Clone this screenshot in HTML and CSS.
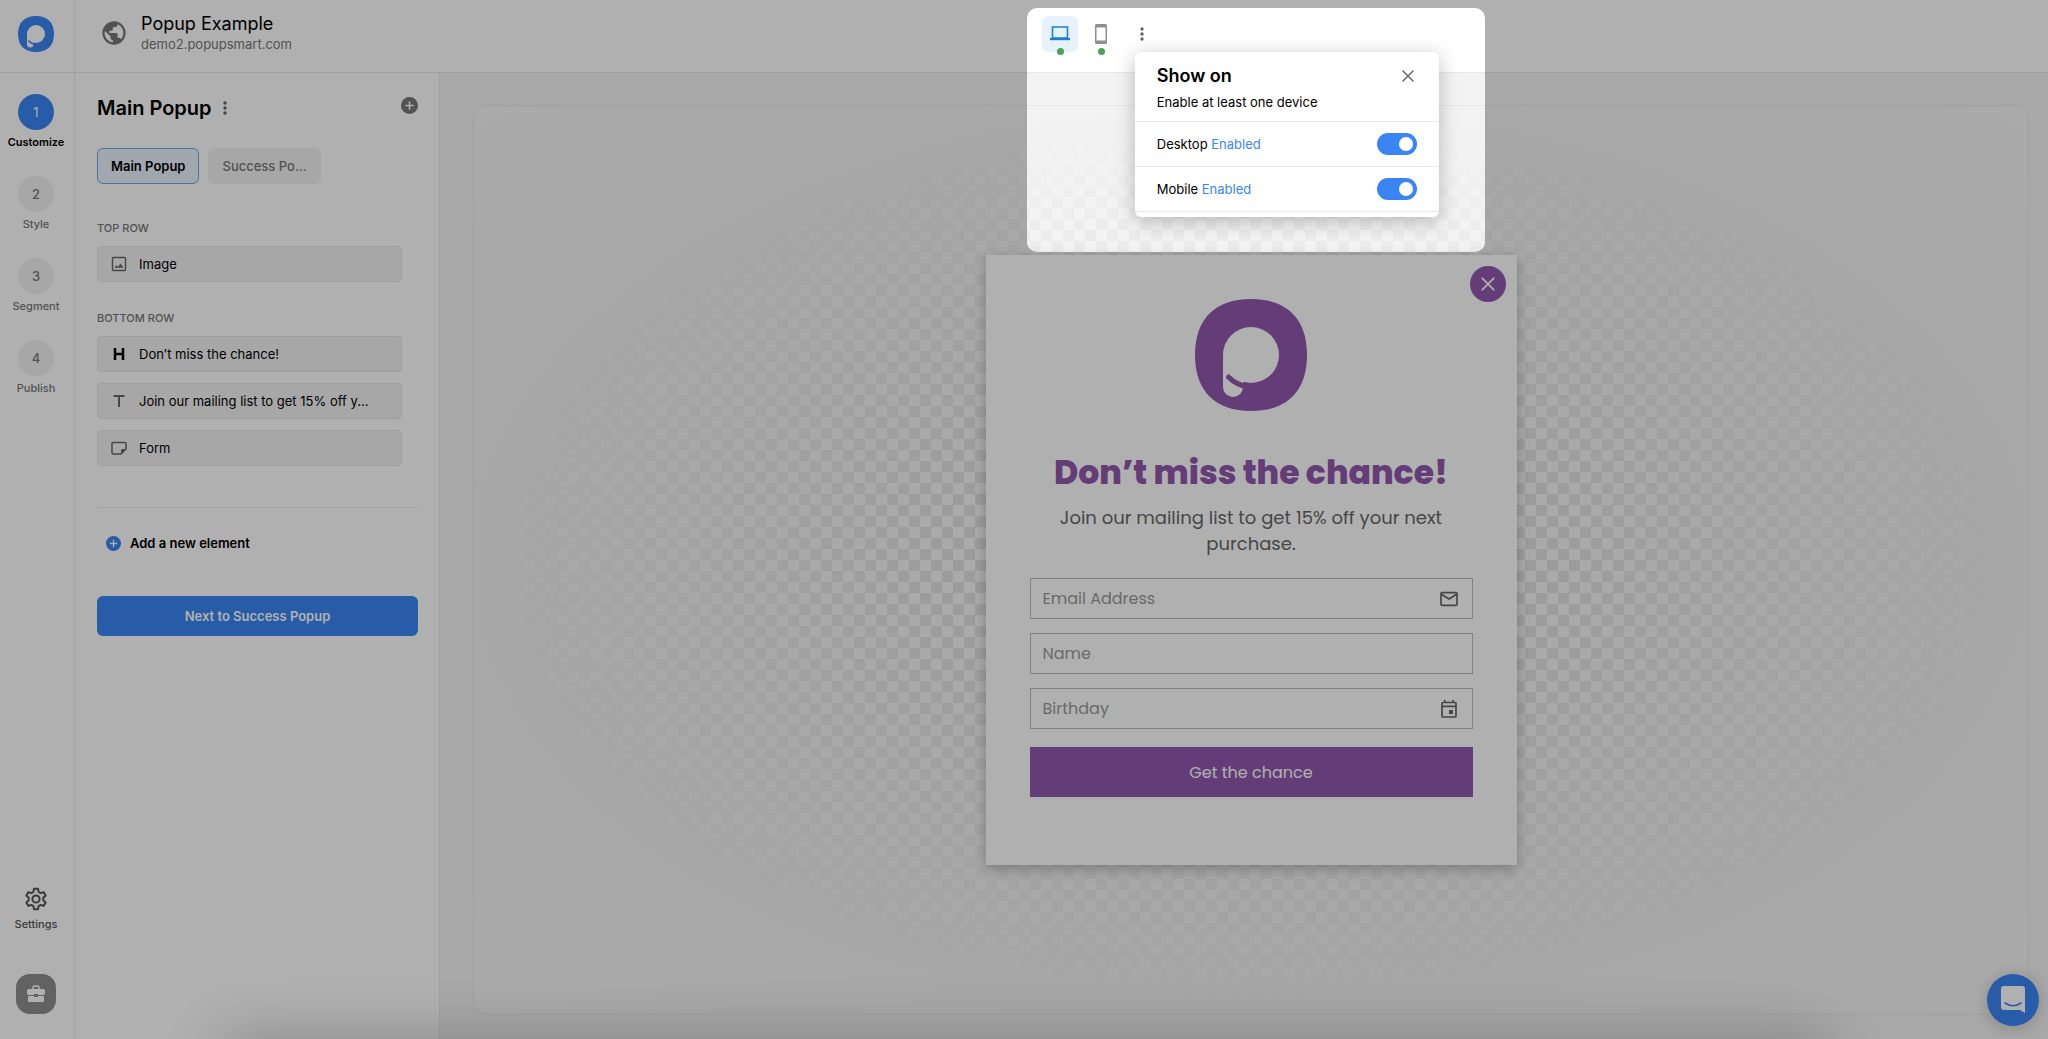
FILE: index.html
```html
<!DOCTYPE html>
<html lang="en">
<head>
  <meta charset="UTF-8" />
  <meta name="viewport" content="width=device-width, initial-scale=1.0" />
  <title>Popup Example - Popupsmart</title>
  <link rel="stylesheet" href="styles.css">
</head>
<body>

<svg class="sprite" aria-hidden="true">
  <symbol id="logo" viewBox="0 0 112 112">
    <path fill="currentColor" d="M56 0C92 0 112 20 112 56S92 112 56 112 0 92 0 56 20 0 56 0z"/>
    <circle cx="56" cy="56" r="28" fill="#fff"/>
    <path fill="#fff" d="M28 56V88a10 10 0 0 0 20 0V84L56 70z"/>
    <path fill="none" stroke="currentColor" stroke-width="5" stroke-linecap="round" d="M33.500 78Q41 86 54 88"/>
    <path fill="currentColor" d="M48 85Q56 86 66 83L60 96H48z"/>
  </symbol>
  <symbol id="plus-circle" viewBox="0 0 18 18">
    <circle cx="9" cy="9" r="9" fill="currentColor"/>
    <path d="M9 4.500v9M4.500 9h9" stroke="#fff" stroke-width="1.600"/>
  </symbol>
  <symbol id="dots" viewBox="0 0 4 14">
    <circle cx="2" cy="2" r="1.700" fill="currentColor"/>
    <circle cx="2" cy="7" r="1.700" fill="currentColor"/>
    <circle cx="2" cy="12" r="1.700" fill="currentColor"/>
  </symbol>
  <symbol id="cross" viewBox="0 0 12 12">
    <path d="M1 1l10 10M11 1L1 11" fill="none" stroke="currentColor" stroke-width="1.500" stroke-linecap="round"/>
  </symbol>
</svg>

<header class="topbar">
  <a class="brand" href="#" aria-label="Popupsmart"><svg width="36" height="36"><use href="#logo"/></svg></a>
  <div class="topbar-main">
    <div class="site">
      <svg width="28" height="28" viewBox="0 0 24 24" fill="currentColor"><path d="M12 2C6.480 2 2 6.480 2 12s4.480 10 10 10 10-4.480 10-10S17.520 2 12 2zm-1 17.930c-3.950-.490-7-3.850-7-7.930 0-.620.080-1.210.210-1.790L9 15v1c0 1.100.9 2 2 2v1.930zm6.900-2.540c-.260-.810-1-1.390-1.900-1.390h-1v-3c0-.550-.450-1-1-1H8v-2h2c.550 0 1-.450 1-1V7h2c1.100 0 2-.9 2-2v-.410c2.930 1.190 5 4.060 5 7.410 0 2.080-.8 3.970-2.100 5.390z"/></svg>
      <div>
        <div class="site-name">Popup Example</div>
        <div class="site-url">demo2.popupsmart.com</div>
      </div>
    </div>

    <div class="devices">
      <button class="device active" aria-label="Desktop">
        <svg width="20" height="20" viewBox="0 0 20 20"><path d="M2.500 3h15v11h-15z" fill="none" stroke="currentColor" stroke-width="1.600"/><path d="M0 14h20v2.200H0z" fill="currentColor"/></svg>
      </button>
      <button class="device" aria-label="Mobile">
        <svg width="12" height="20" viewBox="0 0 12 20"><path d="M1.500 0h9A1.500 1.500 0 0 1 12 1.500v17a1.500 1.500 0 0 1-1.500 1.500h-9A1.500 1.500 0 0 1 0 18.500v-17A1.500 1.500 0 0 1 1.500 0zM1.500 3.500v13h9v-13z" fill="currentColor" fill-rule="evenodd"/></svg>
      </button>
      <button class="device" aria-label="Device options"><svg width="4" height="14"><use href="#dots"/></svg></button>

      <section class="popover">
        <div class="popover-head">
          <h2>Show on</h2>
          <button class="plain" aria-label="Close"><svg width="12" height="12"><use href="#cross"/></svg></button>
          <p>Enable at least one device</p>
        </div>
        <div class="popover-row">
          <label for="onDesktop">Desktop <span>Enabled</span></label>
          <input type="checkbox" class="switch" id="onDesktop" checked>
        </div>
        <div class="popover-row">
          <label for="onMobile">Mobile <span>Enabled</span></label>
          <input type="checkbox" class="switch" id="onMobile" checked>
        </div>
      </section>

      <!-- tour highlight: its shadow dims the rest of the page -->
      <div class="spotlight"></div>
    </div>
  </div>
</header>

<div class="workspace">
  <nav class="rail">
    <a class="step current" href="#"><span>1</span>Customize</a>
    <a class="step" href="#"><span>2</span>Style</a>
    <a class="step" href="#"><span>3</span>Segment</a>
    <a class="step" href="#"><span>4</span>Publish</a>
    <a class="settings" href="#">
      <svg width="24" height="24" viewBox="0 0 24 24" fill="none" stroke="currentColor" stroke-width="2" stroke-linejoin="round"><path d="M10 1.800h4l.6 3.100 2 1.200 3-1 2 3.500-2.300 2.100v2.600l2.300 2.100-2 3.500-3-1-2 1.200-.6 3.100h-4l-.6-3.100-2-1.200-3 1-2-3.500 2.300-2.100v-2.600L2.400 8.600l2-3.500 3 1 2-1.200z"/><circle cx="12" cy="12" r="3.600"/></svg>
      Settings
    </a>
    <button class="toolbox" aria-label="Toolbox">
      <svg width="20" height="20" viewBox="0 0 20 20"><path d="M7 5V3.500Q7 2 8.500 2h3Q13 2 13 3.500V5" fill="none" stroke="currentColor" stroke-width="1.500"/><path d="M2.500 5h15Q19 5 19 6.500V9q0 2-2 2h-5v-1H8v1H3Q1 11 1 9V6.500Q1 5 2.500 5zM2 12h6v1h4v-1h6v4.500q0 1.500-1.500 1.500h-13Q2 18 2 16.500z" fill="currentColor"/></svg>
    </button>
  </nav>

  <aside class="panel">
    <div class="panel-head">
      <h1>Main Popup</h1>
      <button class="plain" aria-label="More"><svg width="4" height="14"><use href="#dots"/></svg></button>
      <button class="plain add" aria-label="Add"><svg width="17" height="17"><use href="#plus-circle"/></svg></button>
    </div>
    <div class="tabs">
      <button class="tab selected">Main Popup</button>
      <button class="tab">Success Po...</button>
    </div>

    <h3>Top row</h3>
    <button class="item">
      <svg width="16" height="16" viewBox="0 0 16 16" fill="none" stroke="currentColor" stroke-width="1.400"><rect x="1.500" y="1.500" width="13" height="13" rx="1"/><path d="M3.500 11.800l2-2.500 1.600 1.500 2.400-3.200 3 4.200z" fill="currentColor" stroke="none"/></svg>
      Image
    </button>

    <h3>Bottom row</h3>
    <button class="item">
      <svg class="dark" width="16" height="16" viewBox="0 0 16 16" fill="none" stroke="currentColor" stroke-width="2.500"><path d="M4 2v12M12 2v12M4 8h8"/></svg>
      Don’t miss the chance!
    </button>
    <button class="item">
      <svg width="16" height="16" viewBox="0 0 16 16" fill="none" stroke="currentColor" stroke-width="2"><path d="M2.500 3h11M8 3v11"/></svg>
      Join our mailing list to get 15% off y...
    </button>
    <button class="item">
      <svg width="16" height="16" viewBox="0 0 16 16" fill="none" stroke="currentColor" stroke-width="1.500" stroke-linejoin="round"><path d="M2 2.500h12q1 0 1 1V9l-5 5H2q-1 0-1-1V3.500q0-1 1-1z"/><path d="M15 9h-3q-2 0-2 2v3z" fill="currentColor" stroke="none"/></svg>
      Form
    </button>

    <hr>
    <button class="add-element"><svg width="15" height="15"><use href="#plus-circle"/></svg>Add a new element</button>
    <button class="next">Next to Success Popup</button>
  </aside>

  <main class="stage">
    <div class="canvas">
      <form class="popup">
        <button type="button" class="popup-close" aria-label="Close"><svg width="14" height="14"><use href="#cross"/></svg></button>
        <svg class="popup-logo" width="112" height="112"><use href="#logo"/></svg>
        <h2>Don’t miss the chance!</h2>
        <p>Join our mailing list to get 15% off your next purchase.</p>
        <div class="field">
          <input type="email" placeholder="Email Address" aria-label="Email Address">
          <svg width="20" height="20" viewBox="0 0 20 20" fill="none" stroke="currentColor" stroke-width="1.700" stroke-linejoin="round"><rect x="2" y="3.700" width="16" height="12.600" rx="1"/><path d="M2 5l8 5 8-5"/></svg>
        </div>
        <div class="field">
          <input type="text" placeholder="Name" aria-label="Name">
        </div>
        <div class="field">
          <input type="text" placeholder="Birthday" aria-label="Birthday">
          <svg width="20" height="20" viewBox="0 0 20 20" fill="none" stroke="currentColor" stroke-width="1.700"><rect x="3" y="3.500" width="14" height="14.500" rx="1"/><path d="M3 7.300h14M5.800 1v3M14.200 1v3"/><path d="M10 11h4v4h-4z" fill="currentColor" stroke="none"/></svg>
        </div>
        <button type="submit" class="popup-submit">Get the chance</button>
      </form>
    </div>
  </main>
</div>

<div class="bottom-shade"></div>
<button class="chat" aria-label="Chat">
  <svg width="24" height="28" viewBox="0 0 24 28"><path d="M3 0h18q3 0 3 3v24l-5-3H3q-3 0-3-3V3q0-3 3-3z" fill="#fff"/><path d="M4 17q8 5.500 16 0" fill="none" stroke="#3a85f3" stroke-width="1.600" stroke-linecap="round"/></svg>
</button>

</body>
</html>
```
FILE: styles.css
```css
* {
  box-sizing: border-box;
}
body {
  margin: 0;
  height: 100vh;
  display: flex;
  flex-direction: column;
  overflow: hidden;
  position: relative;
  font-family: Inter, 'Liberation Sans', sans-serif;
  font-size: 13px;
  color: #000;
  background: #fff;
}
h1, h2, h3, p {
  margin: 0;
}
a {
  color: inherit;
  text-decoration: none;
}
button, input {
  font: inherit;
  color: inherit;
}
button {
  border: none;
  padding: 0;
  background: none;
  cursor: pointer;
}
svg {
  display: block;
  flex: none;
}
.sprite {
  position: absolute;
  width: 0;
  height: 0;
}
.plain {
  display: flex;
  color: #666;
}

/* top bar */
.topbar {
  flex: 0 0 73px;
  display: flex;
  border-bottom: 1px solid #e8e8e8;
  position: relative;
  z-index: 10;
}
.brand {
  flex: 0 0 75px;
  padding: 16px 0 0 18px;
  border-right: 1px solid #ececec;
  color: #3a85f3;
}
.topbar-main {
  flex: 1;
  display: flex;
  align-items: flex-start;
}
.site {
  flex: 0 0 49%;
  display: flex;
  align-items: center;
  gap: 13px;
  padding: 13px 0 0 25px;
  color: #777;
}
.site-name {
  font-size: 18px;
  line-height: 22px;
  color: #000;
}
.site-url {
  line-height: 18px;
}
.devices {
  display: flex;
  gap: 5px;
  padding-top: 16px;
  position: relative;
}
.device {
  width: 36px;
  height: 36px;
  border-radius: 6px;
  display: flex;
  align-items: center;
  justify-content: center;
  position: relative;
  color: #8f8f8f;
}
.device.active {
  background: #e8f2fc;
  color: #1c7cd6;
}
.device.active path:first-child {
  fill: #e3f3fe;
}
.device:nth-child(-n+2)::after {
  content: '';
  position: absolute;
  left: 15px;
  bottom: -3px;
  width: 7px;
  height: 7px;
  border-radius: 50%;
  background: #4ca355;
}
.device:nth-child(3) {
  color: #666;
}
.popover {
  position: absolute;
  top: 52px;
  left: 93px;
  width: 304px;
  padding-bottom: 5px;
  border-radius: 6px;
  background: #fff;
  box-shadow: 0 4px 20px rgba(0, 0, 0, .25);
}
.popover-head {
  display: grid;
  grid-template-columns: 1fr auto;
  align-items: center;
  row-gap: 3px;
  padding: 12px 25px 8px 22px;
}
.popover-head h2 {
  font-size: 18px;
  line-height: 24px;
  font-weight: 600;
}
.popover-head p {
  line-height: 22px;
}
.popover-row {
  height: 45px;
  display: flex;
  align-items: center;
  justify-content: space-between;
  padding: 0 22px;
  border-top: 1px solid #e8e8e8;
}
.popover-row:last-child {
  height: 46px;
  border-bottom: 1px solid #e8e8e8;
}
.popover-row span {
  color: #3a85f3;
}
.switch {
  appearance: none;
  width: 40px;
  height: 22px;
  margin: 0;
  padding: 4px;
  border-radius: 11px;
  background: #bbb;
}
.switch::before {
  content: '';
  display: block;
  width: 14px;
  height: 14px;
  border-radius: 50%;
  background: #fff;
}
.switch:checked {
  background: #3a85f3;
}
.switch:checked::before {
  margin-left: 18px;
}
.spotlight {
  position: absolute;
  top: 8px;
  left: -15px;
  width: 458px;
  height: 244px;
  border-radius: 10px;
  box-shadow: 0 0 0 3000px rgba(0, 0, 0, .31);
  pointer-events: none;
}

.workspace {
  flex: 1;
  min-height: 0;
  display: flex;
}

/* step rail */
.rail {
  flex: 0 0 75px;
  display: flex;
  flex-direction: column;
  align-items: center;
  gap: 26px;
  padding: 21px 2px 25px 0;
  border-right: 1px solid #ececec;
  font-size: 11px;
  line-height: 16px;
  font-weight: 500;
  color: #777;
}
.step, .settings {
  display: flex;
  flex-direction: column;
  align-items: center;
  gap: 4px;
}
.step span {
  width: 36px;
  height: 36px;
  border-radius: 50%;
  background: #f2f2f2;
  font-size: 13px;
  line-height: 36px;
  text-align: center;
}
.step.current {
  color: #000;
  font-weight: 600;
}
.step.current span {
  background: #3a85f3;
  color: #fff;
  font-weight: 400;
}
.settings {
  margin-top: auto;
  gap: 5px;
  color: #555;
}
.toolbox {
  width: 40px;
  height: 40px;
  margin-top: 16px;
  border-radius: 14px;
  background: #8f8f8f;
  color: #fff;
  display: flex;
  align-items: center;
  justify-content: center;
}

/* element panel */
.panel {
  flex: 0 0 365px;
  padding: 20px 21px 0 22px;
  border-right: 1px solid #ececec;
  display: flex;
  flex-direction: column;
}
.panel-head {
  display: flex;
  align-items: center;
  gap: 11px;
  height: 30px;
}
.panel-head h1 {
  font-size: 20px;
  font-weight: 600;
}
.add {
  align-self: flex-start;
  margin: 4px 0 0 auto;
  color: #777;
}
.tabs {
  display: flex;
  gap: 9px;
  margin: 25px 0 35px;
}
.tab {
  height: 36px;
  padding: 0 13px;
  border: 1px solid #f2f2f2;
  border-radius: 6px;
  background: #f2f2f2;
  color: #777;
  font-weight: 500;
}
.tab.selected {
  border-color: #6fa8e8;
  background: #e8f2fc;
  color: #000;
  font-weight: 600;
}
.panel h3 {
  margin-bottom: 9px;
  font-size: 11px;
  line-height: 18px;
  font-weight: 500;
  text-transform: uppercase;
  color: #777;
}
.item {
  height: 36px;
  margin: 0 16px 11px 0;
  padding: 0 13px;
  display: flex;
  align-items: center;
  gap: 12px;
  border: 1px solid #e6e6e6;
  border-radius: 4px;
  background: #f2f2f2;
  white-space: nowrap;
}
.item svg {
  color: #666;
}
.item .dark {
  color: #000;
}
.item + h3 {
  margin-top: 16px;
}
.panel hr {
  width: 100%;
  margin: 30px 0 25px;
  border: 0;
  border-top: 1px solid #ececec;
}
.add-element {
  display: flex;
  align-items: center;
  gap: 9px;
  height: 20px;
  margin-left: 9px;
  font-weight: 600;
}
.add-element svg {
  color: #3a85f3;
}
.next {
  height: 40px;
  margin-top: 43px;
  border-radius: 6px;
  background: #3a85f3;
  color: #fff;
  font-weight: 600;
}

/* preview */
.stage {
  flex: 1;
  display: flex;
  padding: 32px 19px 24px 33px;
  background: #f3f3f3;
}
.canvas {
  flex: 1;
  display: flex;
  align-items: center;
  justify-content: center;
  border: 1px solid #e8e8e8;
  border-radius: 14px;
  background:
    radial-gradient(rgba(242, 242, 242, 0) 5%, #f2f2f2 68%, #f6f6f6 100%),
    repeating-conic-gradient(#dadada 0 25%, #f8f8f8 0 50%) 17px 3px / 22px 22px;
}
.popup {
  width: 531px;
  padding: 44px 44px 68px;
  display: flex;
  flex-direction: column;
  position: relative;
  background: #fff;
  box-shadow: 0 4px 12px rgba(0, 0, 0, .25);
  font-family: Poppins, Inter, sans-serif;
  text-align: center;
}
.popup-close {
  position: absolute;
  top: 11px;
  right: 11px;
  width: 36px;
  height: 36px;
  border-radius: 50%;
  background: #9258ae;
  color: #fff;
  display: flex;
  align-items: center;
  justify-content: center;
}
.popup-logo {
  align-self: center;
  color: #9258ae;
}
.popup h2 {
  margin-top: 37px;
  font-size: 33px;
  line-height: 50px;
  font-weight: 800;
  color: #9258ae;
}
.popup p {
  margin: 7px 0 21px;
  font-size: 18px;
  line-height: 26px;
  color: #666;
}
.field {
  height: 41px;
  margin-bottom: 14px;
  padding: 0 13px 0 12px;
  display: flex;
  align-items: center;
  border: 1px solid #bbb;
  color: #666;
}
.field input {
  flex: 1;
  min-width: 0;
  padding: 0;
  border: none;
  outline: none;
  background: none;
  font-size: 16px;
}
.field input::placeholder {
  color: #999;
}
.popup-submit {
  height: 50px;
  margin-top: 4px;
  background: #9258ae;
  color: #fff;
  font-size: 16px;
}

.bottom-shade {
  position: absolute;
  top: 100%;
  left: 11%;
  right: 11%;
  height: 40px;
  box-shadow: 0 4px 60px rgba(0, 0, 0, .3);
}
.chat {
  position: absolute;
  right: 9px;
  bottom: 13px;
  width: 52px;
  height: 52px;
  border-radius: 50%;
  background: #3a85f3;
  box-shadow: 0 2px 16px rgba(0, 0, 0, .2);
  display: flex;
  align-items: center;
  justify-content: center;
}
```
